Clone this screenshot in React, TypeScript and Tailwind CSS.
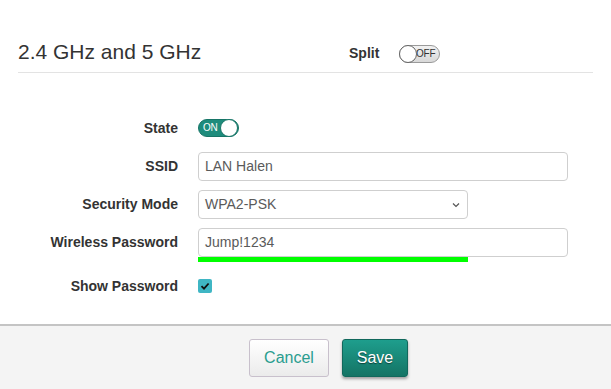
import React from "react";

function Toggle({ on }: { on: boolean }) {
  if (on) {
    return (
      <div className="relative w-[41px] h-[18px] rounded-full bg-[#1e8c7c] border border-[#177567] flex items-center">
        <span className="ml-[4px] text-[10px] leading-none text-white tracking-tight">ON</span>
        <span className="absolute right-[0px] top-[-1px] w-[18px] h-[18px] rounded-full bg-white border border-[#177567]" />
      </div>
    );
  }
  return (
    <div className="relative w-[41px] h-[18px] rounded-full bg-gradient-to-b from-[#f2f2f2] to-[#d8d8d8] border border-[#9a9a9a] flex items-center justify-end">
      <span className="mr-[4px] text-[10px] leading-none text-[#333] tracking-tight">OFF</span>
      <span className="absolute left-[-1px] top-[-1px] w-[18px] h-[18px] rounded-full bg-white border border-[#666]" />
    </div>
  );
}

export default function App() {
  const font = { fontFamily: '"Liberation Sans", Arial, sans-serif' };
  return (
    <div className="w-[611px] h-[389px] bg-white flex flex-col" style={font}>
      <div className="flex items-end h-[73px] mx-[18px] border-b border-[#e3e3e3] pb-[10px]">
        <div className="text-[21px] text-[#333] leading-none w-[331px]">2.4 GHz and 5 GHz</div>
        <div className="text-[14px] font-bold text-[#333] leading-none mb-[2px]">Split</div>
        <div className="ml-[20px] mb-[-1px]">
          <Toggle on={false} />
        </div>
      </div>

      <div className="flex-1 flex flex-col pt-[46px]">
        <div className="flex items-center h-[18px]">
          <div className="w-[178px] text-right text-[14px] font-bold text-[#333]">State</div>
          <div className="ml-[20px]">
            <Toggle on={true} />
          </div>
        </div>

        <div className="flex items-center h-[29px] mt-[15px]">
          <div className="w-[178px] text-right text-[14px] font-bold text-[#333]">SSID</div>
          <div className="ml-[20px] w-[370px] h-[29px] border border-[#cfcfcf] rounded-[4px] px-[6px] flex items-center text-[14px] text-[#5a5a5a]">
            LAN Halen
          </div>
        </div>

        <div className="flex items-center h-[29px] mt-[9px]">
          <div className="w-[178px] text-right text-[14px] font-bold text-[#333]">Security Mode</div>
          <div className="ml-[20px] w-[270px] h-[29px] border border-[#cfcfcf] rounded-[4px] pl-[6px] pr-[6px] flex items-center justify-between text-[14px] text-[#5a5a5a]">
            <span>WPA2-PSK</span>
            <svg width="10" height="10" viewBox="0 0 10 10">
              <path d="M2 3.5 L5 6.5 L8 3.5" fill="none" stroke="#555" strokeWidth="1.2" />
            </svg>
          </div>
        </div>

        <div className="flex items-center h-[29px] mt-[9px]">
          <div className="w-[178px] text-right text-[14px] font-bold text-[#333]">Wireless Password</div>
          <div className="ml-[20px] w-[370px] h-[29px] border border-[#cfcfcf] rounded-[4px] px-[6px] flex items-center text-[14px] text-[#5a5a5a]">
            Jump!1234
          </div>
        </div>
        <div className="ml-[198px] w-[270px] h-[5px] bg-[#00ff00]" />

        <div className="flex items-center h-[14px] mt-[17px]">
          <div className="w-[178px] text-right text-[14px] leading-none font-bold text-[#333]">Show Password</div>
          <div className="ml-[20px] w-[14px] h-[14px] rounded-[2px] bg-[#3fb6c4] flex items-center justify-center">
            <svg width="10" height="10" viewBox="0 0 10 10">
              <path d="M1.5 5.2 L4 7.7 L8.6 2.5" fill="none" stroke="#111" strokeWidth="1.8" />
            </svg>
          </div>
        </div>
      </div>

      <div className="h-[65px] bg-[#f4f4f4] border-t-2 border-[#c4c4c4] flex items-start justify-center pt-[13px] gap-[13px] pl-[46px]">
        <button className="w-[80px] h-[38px] rounded-[3px] border border-[#c8c0cc] bg-gradient-to-b from-white to-[#ebebeb] text-[16px] text-[#2a9d8f]" style={font}>
          Cancel
        </button>
        <button className="w-[66px] h-[38px] rounded-[3px] border border-[#11685c] bg-gradient-to-b from-[#1e9e8d] to-[#147465] text-[16px] text-white shadow-[0_2px_3px_rgba(0,0,0,0.35)] [text-shadow:0_1px_1px_rgba(0,0,0,0.5)]" style={font}>
          Save
        </button>
      </div>
    </div>
  );
}
